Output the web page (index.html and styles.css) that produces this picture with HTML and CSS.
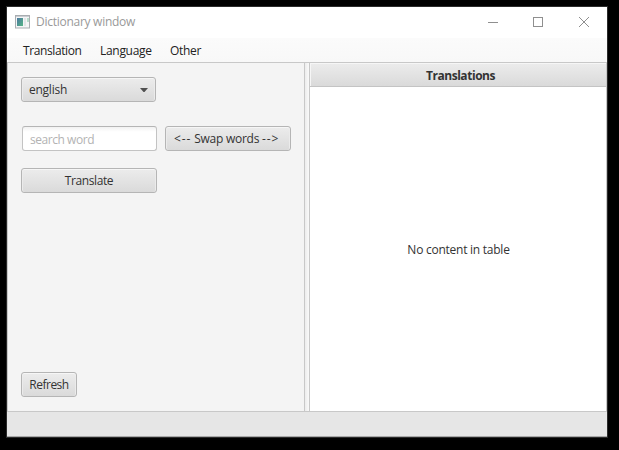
FILE: index.html
```html
<!DOCTYPE html>
<html lang="en">
<head>
<meta charset="utf-8">
<title>Dictionary window</title>
<link rel="stylesheet" href="styles.css">
</head>
<body>
<div class="window">
  <header class="titlebar">
    <svg class="app-icon" width="15" height="14" viewBox="0 0 15 14">
      <defs><linearGradient id="g" x1="0" y1="0" x2="1" y2="1"><stop offset="0" stop-color="#4c78a0"/><stop offset="1" stop-color="#55b586"/></linearGradient></defs>
      <rect x=".5" y=".5" width="14" height="12.5" fill="#f4f5f6" stroke="#a9adb1"/>
      <path d="M1 1.5h13" stroke="#c9cdd1"/>
      <rect x="2" y="3" width="6" height="8" fill="url(#g)"/>
      <rect x="9" y="3" width="2" height="8" fill="#e2e5e7"/>
      <rect x="12" y="3" width="2" height="4" fill="#b8dccb"/>
    </svg>
    <span class="title">Dictionary window</span>
    <svg class="controls" width="102" height="12" viewBox="0 0 102 12" fill="none" stroke="#8f8f8f">
      <path d="M0 6.5h10"/>
      <rect x="45.5" y="1.5" width="9" height="9"/>
      <path d="M91 1l10 10M101 1L91 11"/>
    </svg>
  </header>
  <nav class="menubar">
    <span class="menu-translation">Translation</span>
    <span class="menu-language">Language</span>
    <span class="menu-other">Other</span>
  </nav>
  <main class="split">
    <section class="form">
      <div class="control combo"><span>english</span><svg width="8" height="4" viewBox="0 0 8 4"><path d="M0 0h8L4.5 4h-1z" fill="#505050"/></svg></div>
      <div class="row">
        <input class="field" type="text" placeholder="search word" aria-label="search word">
        <button class="control swap"><span><span class="arrow">&lt;--</span> Swap words <span class="arrow">--&gt;</span></span></button>
      </div>
      <button class="control translate"><span>Translate</span></button>
      <button class="control refresh"><span>Refresh</span></button>
    </section>
    <div class="divider"></div>
    <section class="table">
      <div class="column-header"><span>Translations</span></div>
      <div class="empty"><span>No content in table</span></div>
    </section>
  </main>
  <footer class="status"></footer>
</div>
</body>
</html>
```

FILE: styles.css
```css
* { box-sizing: border-box; }
body {
  margin: 0;
  height: 450px;
  padding: 6px 11px 12px 6px;
  background: #000;
  overflow: hidden;
  font: 12px/16px "Open Sans", "Noto Sans", sans-serif;
  color: #333;
  letter-spacing: -0.25px;
}
.window {
  width: 602px;
  height: 432px;
  border: 1px solid #2b2b2b;
  background: #fff;
  display: flex;
  flex-direction: column;
}
.titlebar {
  height: 31px;
  display: flex;
  align-items: center;
  padding: 0 17px 2px 8px;
}
.app-icon { margin-right: 6px; }
.title { color: #999; padding-top: 1px; letter-spacing: -0.27px; }
.controls { margin-left: auto; }
.menubar {
  height: 24px;
  display: flex;
  align-items: center;
  padding: 1px 0 0 16px;
  background: linear-gradient(#fbfbfb, #f8f8f8);
  color: #222;
  letter-spacing: -0.3px;
}
.menu-translation { width: 77px; letter-spacing: -0.4px; }
.menu-language { width: 70px; }
.split {
  height: 350px;
  display: flex;
  border: 1px solid #c8c8c8;
}
.form {
  width: 296px;
  padding: 14px 0 14px 13px;
  display: flex;
  flex-direction: column;
  align-items: flex-start;
  background: #f4f4f4;
}
.control {
  height: 25px;
  padding: 1px 7px 0;
  display: flex;
  align-items: center;
  justify-content: center;
  border: 1px solid #b5b5b5;
  border-radius: 3px;
  background: linear-gradient(#ececec, #dadada);
  box-shadow: inset 0 1px #f6f6f6, inset 1px 0 #ebebeb, inset -1px 0 #ebebeb;
  font: inherit;
  letter-spacing: inherit;
  color: #333;
  white-space: nowrap;
}
.combo {
  width: 135px;
  justify-content: space-between;
  letter-spacing: -0.25px;
}
.row {
  display: flex;
  gap: 8px;
  margin: 24px 0 17px 1px;
}
.field {
  width: 135px;
  height: 25px;
  padding: 1px 7px 0;
  border: 1px solid #c3c3c3;
  border-top-color: #b5b5b5;
  border-radius: 3px;
  background: linear-gradient(#f2f2f2, #fff 5px);
  font: inherit;
  letter-spacing: -0.45px;
}
.field::placeholder { color: #b3b3b3; opacity: 1; }
.swap {
  width: 126px;
  justify-content: flex-start;
  padding-left: 8px;
}
.arrow { letter-spacing: 0.9px; }
.translate { width: 136px; letter-spacing: -0.4px; }
.refresh { width: 56px; margin-top: auto; letter-spacing: -0.5px; }
.divider {
  width: 6px;
  border: solid #c8c8c8;
  border-width: 0 1px;
  background: linear-gradient(90deg, #ececec, #fafafa);
}
.table {
  flex: 1;
  display: flex;
  flex-direction: column;
}
.column-header {
  height: 24px;
  display: flex;
  align-items: center;
  justify-content: center;
  padding: 2px 0 0 5px;
  border-bottom: 1px solid #c4c4c4;
  background: linear-gradient(#ececec, #dadada);
  box-shadow: inset 1px 1px #f6f6f6;
  font-weight: bold;
  letter-spacing: -0.45px;
}
.empty {
  flex: 1;
  display: flex;
  align-items: center;
  justify-content: center;
  padding: 2px 0 0 1px;
}
.status {
  flex: 1;
  background: #e6e6e6;
  border-bottom: 1px solid #a8a8a8;
}
```
